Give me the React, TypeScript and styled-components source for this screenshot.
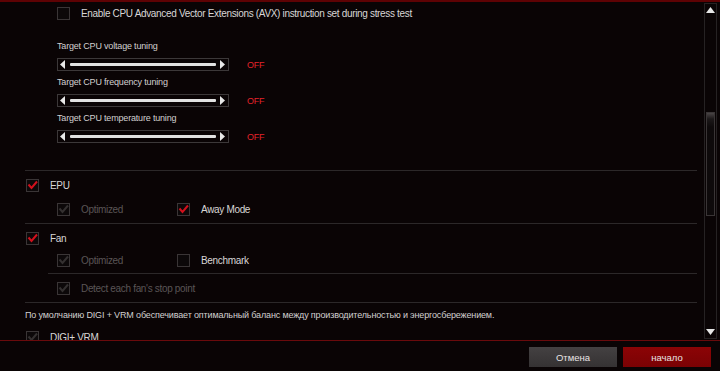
import React from "react";
import styled, { createGlobalStyle } from "styled-components";

const GlobalStyle = createGlobalStyle`
  html, body {
    margin: 0;
    padding: 0;
    background: #0a0405;
  }
  body {
    font-family: "Liberation Sans", Arial, sans-serif;
  }
`;

type CheckState = "off" | "on" | "dim";

const Check: React.FC<{ state: CheckState }> = ({ state }) => (
  <Box>
    {state !== "off" && (
      <svg width="13" height="13" viewBox="0 0 13 13">
        <polyline
          points="2.5,5.5 5.5,9 11,2.5"
          fill="none"
          stroke={state === "on" ? "#d2101c" : "#343030"}
          strokeWidth="2"
        />
      </svg>
    )}
  </Box>
);

const Slider: React.FC = () => (
  <SliderRow>
    <SliderBox>
      <svg width="6" height="9" viewBox="0 0 6 9">
        <polygon points="5,0 5,9 0,4.5" fill="#e8e8e8" />
      </svg>
      <Track />
      <svg width="6" height="9" viewBox="0 0 6 9">
        <polygon points="0,0 0,9 5,4.5" fill="#e8e8e8" />
      </svg>
    </SliderBox>
    <OffText>OFF</OffText>
  </SliderRow>
);

const tuning = [
  "Target CPU voltage tuning",
  "Target CPU frequency tuning",
  "Target CPU temperature tuning",
];

const App: React.FC = () => {
  return (
    <Page>
      <GlobalStyle />
      <Main>
        <Content>
          <Row h={22} indent={32}>
            <Check state="off" />
            <Label>Enable CPU Advanced Vector Extensions (AVX) instruction set during stress test</Label>
          </Row>
          <TuningList>
            {tuning.map((t) => (
              <Tuning key={t}>
                <TuningLabel>{t}</TuningLabel>
                <Slider />
              </Tuning>
            ))}
          </TuningList>

          <Divider top={27} />
          <Row h={28} indent={1}>
            <Check state="on" />
            <Label>EPU</Label>
          </Row>
          <Row h={20} indent={32}>
            <Option>
              <Check state="dim" />
              <Label dim>Optimized</Label>
            </Option>
            <Option>
              <Check state="on" />
              <Label>Away Mode</Label>
            </Option>
          </Row>

          <Divider top={4} />
          <Row h={28} indent={1}>
            <Check state="on" />
            <Label>Fan</Label>
          </Row>
          <Row h={16} indent={32}>
            <Option>
              <Check state="dim" />
              <Label dim>Optimized</Label>
            </Option>
            <Option>
              <Check state="off" />
              <Label>Benchmark</Label>
            </Option>
          </Row>
          <Divider top={5} inset={23} />
          <Row h={28} indent={32}>
            <Check state="dim" />
            <Label dim>Detect each fan's stop point</Label>
          </Row>
          <Divider top={0} />
          <Note>По умолчанию DIGI + VRM обеспечивает оптимальный баланс между производительностью и энергосбережением.</Note>
          <Row h={20} indent={1}>
            <Check state="dim" />
            <Label>DIGI+ VRM</Label>
          </Row>
        </Content>
        <ScrollBar>
          <svg width="9" height="6" viewBox="0 0 9 6">
            <polygon points="0,6 9,6 4.5,0" fill="#e6e6e6" />
          </svg>
          <ScrollTrack>
            <Thumb />
          </ScrollTrack>
          <svg width="9" height="6" viewBox="0 0 9 6">
            <polygon points="0,0 9,0 4.5,6" fill="#e6e6e6" />
          </svg>
        </ScrollBar>
      </Main>
      <Footer>
        <Button>Отмена</Button>
        <Button primary>начало</Button>
      </Footer>
    </Page>
  );
};

export default App;

const Page = styled.div`
  width: 720px;
  height: 371px;
  display: flex;
  flex-direction: column;
  background: #0a0405;
  overflow: hidden;
`;

const Main = styled.div`
  height: 338px;
  border-top: 2px solid #5e0204;
  border-bottom: 1px solid #6a0a0c;
  display: flex;
  overflow: hidden;
`;

const Content = styled.div`
  flex: 1;
  padding-left: 25px;
  padding-right: 7px;
  display: flex;
  flex-direction: column;
  overflow: hidden;
`;

const Row = styled.div<{ h: number; indent: number }>`
  flex: none;
  height: ${(p) => p.h}px;
  padding-left: ${(p) => p.indent}px;
  display: flex;
  align-items: center;
`;

const Option = styled.div`
  width: 120px;
  display: flex;
  align-items: center;
`;

const Box = styled.div`
  flex: none;
  width: 11px;
  height: 11px;
  border: 1px solid #3a3536;
  background: #0c0809;
  margin-right: 11px;
  display: flex;
  align-items: center;
  justify-content: center;
  svg {
    flex: none;
  }
`;

const Label = styled.span<{ dim?: boolean }>`
  font-size: 10px;
  letter-spacing: -0.33px;
  color: ${(p) => (p.dim ? "#5a5556" : "#d8d6d6")};
  white-space: nowrap;
`;

const TuningList = styled.div`
  padding-left: 32px;
  padding-top: 15px;
  display: flex;
  flex-direction: column;
  gap: 4px;
`;

const Tuning = styled.div`
  display: flex;
  flex-direction: column;
  gap: 5px;
`;

const TuningLabel = styled.div`
  font-size: 9px;
  letter-spacing: -0.18px;
  line-height: 14px;
  color: #d2d0d0;
`;

const SliderRow = styled.div`
  display: flex;
  align-items: center;
  height: 13px;
`;

const SliderBox = styled.div`
  box-sizing: border-box;
  width: 172px;
  height: 13px;
  border: 1px solid #3c3839;
  display: flex;
  align-items: center;
  gap: 4px;
  padding: 0 2px;
`;

const Track = styled.div`
  flex: 1;
  height: 3px;
  background: #e2e2e2;
  border-radius: 1px;
`;

const OffText = styled.span`
  margin-left: 18px;
  font-size: 9px;
  letter-spacing: -0.3px;
  color: #e3232a;
`;

const Divider = styled.div<{ top: number; inset?: number }>`
  flex: none;
  height: 1px;
  margin-top: ${(p) => p.top}px;
  margin-left: ${(p) => p.inset ?? 0}px;
  background: #2c2829;
`;

const Note = styled.div`
  flex: none;
  height: 24px;
  display: flex;
  align-items: center;
  font-size: 9px;
  letter-spacing: -0.15px;
  color: #d2d0d0;
  white-space: nowrap;
`;

const ScrollBar = styled.div`
  flex: none;
  width: 13px;
  margin: 1px 3px 0 0;
  border: 1px solid #262223;
  display: flex;
  flex-direction: column;
  align-items: center;
  padding: 3px 0;
  gap: 4px;
  box-sizing: border-box;
  height: 336px;
`;

const ScrollTrack = styled.div`
  flex: 1;
  width: 100%;
  position: relative;
`;

const Thumb = styled.div`
  position: absolute;
  top: 95px;
  left: 1px;
  width: 9px;
  height: 104px;
  box-sizing: border-box;
  border: 1px solid #3a3536;
  background: linear-gradient(#4a4546 0, #1c1819 6px, #0e0a0b 14px);
`;

const Footer = styled.div`
  flex: 1;
  display: flex;
  justify-content: flex-end;
  align-items: flex-start;
  padding: 6px 9px 0 0;
  gap: 6px;
`;

const Button = styled.button<{ primary?: boolean }>`
  width: 88px;
  height: 20px;
  border: none;
  padding: 0;
  font-family: "Liberation Sans", Arial, sans-serif;
  font-size: 9.5px;
  color: #e8e4e4;
  background: ${(p) =>
    p.primary
      ? "linear-gradient(#8c0406, #7a0204)"
      : "linear-gradient(#444142, #353233)"};
`;
